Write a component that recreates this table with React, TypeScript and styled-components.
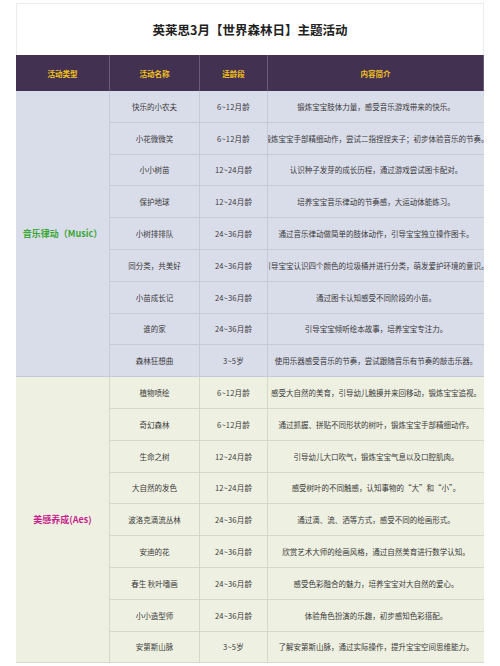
import styled, { createGlobalStyle } from "styled-components";

const GlobalStyle = createGlobalStyle`
  html, body {
    margin: 0;
    padding: 0;
    background: #ffffff;
  }
  body {
    font-family: "Noto Sans CJK SC", "Noto Sans", sans-serif;
    color: #333;
  }
`;

const Page = styled.div`
  width: 500px;
  height: 666px;
  overflow: hidden;
  padding: 3px 16px 0 16px;
  box-sizing: border-box;
`;

const Card = styled.div`
  border-top: 1px solid #ececec;
  background: #fff;
`;

const Title = styled.h1`
  margin: 0;
  height: 51px;
  display: flex;
  align-items: center;
  justify-content: center;
  font-size: 12.5px;
  font-weight: 700;
  color: #222;
  border-left: 1px solid #ececec;
  border-right: 1px solid #ececec;
`;

const Table = styled.div`
  display: grid;
  grid-template-columns: 94px 90px 68px 1fr;
  grid-template-rows: 36px;
  grid-auto-rows: 31.8px;
`;

const HeadCell = styled.div`
  background: #433152;
  color: #f2c21b;
  font-size: 7.5px;
  font-weight: 700;
  display: flex;
  align-items: center;
  justify-content: center;
  border-right: 1px solid #6a5b78;
  &:last-child {
    border-right: none;
  }
`;

const Cell = styled.div<{ $bg: string; $line: string }>`
  background: ${(p) => p.$bg};
  border-right: 1px solid ${(p) => p.$line};
  border-bottom: 1px solid ${(p) => p.$line};
  display: flex;
  align-items: center;
  justify-content: center;
  font-size: 7.5px;
  color: #3a3a3a;
  white-space: nowrap;
  overflow: hidden;
  min-width: 0;
`;

const TypeCell = styled(Cell)<{ $span: number; $color: string }>`
  grid-row: span ${(p) => p.$span};
  color: ${(p) => p.$color};
  font-size: 9px;
  font-weight: 700;
`;

const AgeCell = styled(Cell)`
  letter-spacing: 0.2px;
`;

const DescCell = styled(Cell)`
  border-right: none;
`;

type Row = [string, string, string];

const sections: {
  label: string;
  color: string;
  bg: string;
  line: string;
  rows: Row[];
}[] = [
  {
    label: "音乐律动（Music）",
    color: "#3aa835",
    bg: "#d9dce9",
    line: "#c6cad8",
    rows: [
      ["快乐的小农夫", "6~12月龄", "锻炼宝宝肢体力量，感受音乐游戏带来的快乐。"],
      ["小花微微笑", "6~12月龄", "锻炼宝宝手部精细动作，尝试二指捏捏夹子；初步体验音乐的节奏。"],
      ["小小树苗", "12~24月龄", "认识种子发芽的成长历程，通过游戏尝试图卡配对。"],
      ["保护地球", "12~24月龄", "培养宝宝音乐律动的节奏感，大运动体能练习。"],
      ["小树排排队", "24~36月龄", "通过音乐律动做简单的肢体动作，引导宝宝独立操作图卡。"],
      ["同分类，共美好", "24~36月龄", "引导宝宝认识四个颜色的垃圾桶并进行分类，萌发爱护环境的意识。"],
      ["小苗成长记", "24~36月龄", "通过图卡认知感受不同阶段的小苗。"],
      ["谁的家", "24~36月龄", "引导宝宝倾听绘本故事，培养宝宝专注力。"],
      ["森林狂想曲", "3~5岁", "使用乐器感受音乐的节奏，尝试跟随音乐有节奏的敲击乐器。"],
    ],
  },
  {
    label: "美感养成(Aes)",
    color: "#c81f8e",
    bg: "#eef0e1",
    line: "#d6d9c8",
    rows: [
      ["植物喷绘", "6~12月龄", "感受大自然的美育，引导幼儿触摸并来回移动，锻炼宝宝追视。"],
      ["奇幻森林", "6~12月龄", "通过抓握、拼贴不同形状的树叶，锻炼宝宝手部精细动作。"],
      ["生命之树", "12~24月龄", "引导幼儿大口吹气，锻炼宝宝气息以及口腔肌肉。"],
      ["大自然的发色", "12~24月龄", "感受树叶的不同触感，认知事物的“大”和“小”。"],
      ["波洛克滴流丛林", "24~36月龄", "通过滴、流、洒等方式，感受不同的绘画形式。"],
      ["安迪的花", "24~36月龄", "欣赏艺术大师的绘画风格，通过自然美育进行数学认知。"],
      ["春生 秋叶嗜画", "24~36月龄", "感受色彩融合的魅力，培养宝宝对大自然的爱心。"],
      ["小小造型师", "24~36月龄", "体验角色扮演的乐趣，初步感知色彩搭配。"],
      ["安第斯山脉", "3~5岁", "了解安第斯山脉，通过实际操作，提升宝宝空间思维能力。"],
    ],
  },
];

export default function App() {
  return (
    <>
      <GlobalStyle />
      <Page>
        <Card>
          <Title>英莱思3月【世界森林日】主题活动</Title>
          <Table>
            <HeadCell>活动类型</HeadCell>
            <HeadCell>活动名称</HeadCell>
            <HeadCell>适龄段</HeadCell>
            <HeadCell>内容简介</HeadCell>
            {sections.map((s) => [
              <TypeCell
                key={s.label}
                $span={s.rows.length}
                $color={s.color}
                $bg={s.bg}
                $line={s.line}
              >
                {s.label}
              </TypeCell>,
              ...s.rows.map(([name, age, desc]) => [
                <Cell key={name + "-n"} $bg={s.bg} $line={s.line}>
                  {name}
                </Cell>,
                <AgeCell key={name + "-a"} $bg={s.bg} $line={s.line}>
                  {age}
                </AgeCell>,
                <DescCell key={name + "-d"} $bg={s.bg} $line={s.line}>
                  {desc}
                </DescCell>,
              ]),
            ])}
          </Table>
        </Card>
      </Page>
    </>
  );
}
